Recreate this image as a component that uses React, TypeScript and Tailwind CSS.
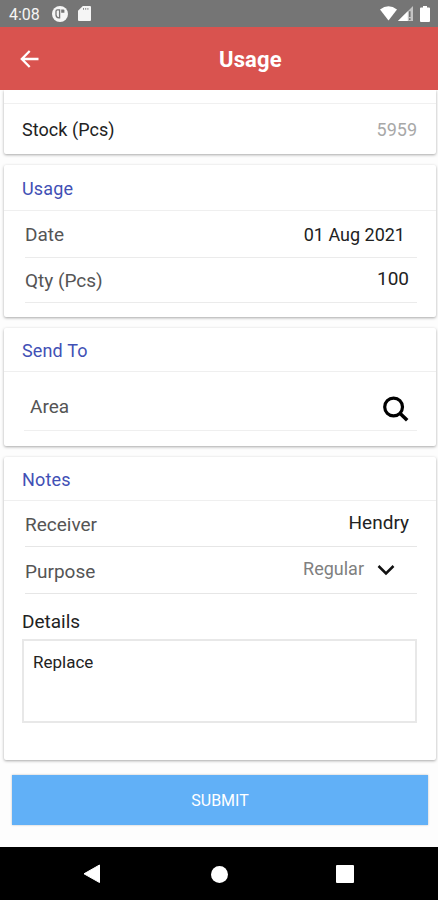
import type { ReactNode } from "react";

const Card = ({
  title,
  size = "sm",
  children,
}: {
  title: string;
  size?: "sm" | "md";
  children: ReactNode;
}) => {
  return (
    <section className="mx-1 mr-0.5 rounded-[2px] bg-white shadow-[0_1px_3px_rgba(0,0,0,0.34)]">
      <h2
        className={`flex items-center border-b border-[#efefef] pl-[18px] text-[18px] tracking-[0.15px] text-[#4150b5] ${
          size === "md" ? "h-[46px] pt-px" : "h-[44px] pt-[2px]"
        }`}
      >
        {title}
      </h2>
      {children}
    </section>
  );
};

const StatusBar = () => {
  return (
    <div className="flex h-[27px] shrink-0 items-center bg-[#757575] pl-[9px] pr-[8px] text-[#f5f5f5]">
      <span className="w-[43px] pt-[2px] text-[16px] leading-none">4:08</span>
      <svg width="16" height="16" viewBox="0 0 16 16">
        <circle cx="8" cy="8" r="8" fill="#f5f5f5" />
        <path
          d="M7.6 3.8H5.4a1.4 1.4 0 0 0-1.4 1.4v3.6a3 3 0 0 0 3 3h.6z"
          fill="none"
          stroke="#757575"
          strokeWidth="1.3"
        />
        <path d="M9.2 3.6h2.2a1 1 0 0 1 1 1v2.2H9.2z" fill="#757575" />
      </svg>
      <svg className="ml-[10px]" width="13" height="15" viewBox="0 0 13 15">
        <path
          d="M4.8 0H12a1 1 0 0 1 1 1v13a1 1 0 0 1-1 1H1a1 1 0 0 1-1-1V4.8z"
          fill="#f5f5f5"
        />
        <path d="M5.5 2v1.8M7.7 2v1.8M9.9 2v1.8" stroke="#8a8a8a" strokeWidth="1" />
      </svg>
      <svg className="ml-auto" width="17" height="15" viewBox="0 0 17 15">
        <path d="M0 3.5Q8.5-2.9 17 3.5L8.5 14.5z" fill="#fff" />
      </svg>
      <svg className="ml-[1px]" width="15" height="15" viewBox="0 0 15 15">
        <path d="M15 0v15H0z" fill="#c4c4c4" />
        <path d="M9.8 5.2V15H0z" fill="#fff" />
        <path d="M11.8 5.2v5.8M11.8 12.3V14" stroke="#686868" strokeWidth="1.4" />
      </svg>
      <svg className="ml-[7px]" width="10" height="16" viewBox="0 0 10 16">
        <path
          d="M3 0h4v1.5h2a1 1 0 0 1 1 1V15a1 1 0 0 1-1 1H1a1 1 0 0 1-1-1V2.5a1 1 0 0 1 1-1h2z"
          fill="#fff"
        />
      </svg>
    </div>
  );
};

const Header = () => {
  return (
    <header className="flex h-[63px] shrink-0 items-center bg-[#d9534f] pl-[20px] text-white">
      <svg width="20" height="18" viewBox="0 0 20 18">
        <path
          d="M18.5 9H2M9.7 1L1.8 9l7.9 8"
          fill="none"
          stroke="currentColor"
          strokeWidth="2.3"
        />
      </svg>
      <h1 className="ml-[179px] pt-[2px] text-[22px] font-bold tracking-[0.15px]">Usage</h1>
    </header>
  );
};

const NavBar = () => {
  return (
    <nav className="mt-auto h-[53px] shrink-0 bg-black pl-[83px] pt-[17px]">
      <div className="flex h-[20px] items-center">
        <svg width="18" height="20" viewBox="0 0 18 20">
          <path d="M16.5 1v17.5L1 9.8z" fill="#fff" stroke="#fff" strokeLinejoin="round" />
        </svg>
        <div className="ml-[110px] size-[17px] rounded-full bg-white" />
        <div className="ml-[108px] size-[18px] rounded-[1px] bg-white" />
      </div>
    </nav>
  );
};

const App = () => {
  return (
    <div className="flex h-[900px] w-[438px] flex-col overflow-hidden bg-[#fdfdfd] font-[Roboto,sans-serif] text-[19px] leading-[27px] text-[#555]">
      <StatusBar />
      <Header />
      <main className="flex flex-col">
        <section className="mx-1 mr-0.5 h-[64px] rounded-b-[2px] bg-white pt-[13px] shadow-[0_1px_3px_rgba(0,0,0,0.34)] [clip-path:inset(0_-4px_-5px_-4px)]">
          <div className="flex h-[51px] items-center justify-between border-t border-[#f0f0f0] pl-[18px] pr-[19px] text-[18px]">
            <span className="tracking-[0.05px] text-[#222]">Stock (Pcs)</span>
            <span className="text-[#a8a8a8]">5959</span>
          </div>
        </section>

        <div className="mt-[11px]">
          <Card title="Usage" size="md">
            <div className="ml-[21px] mr-[19px] h-[106px]">
              <div className="flex h-[47px] items-center justify-between border-b border-[#ebebeb] pr-[12px]">
                <span>Date</span>
                <span className="text-[18px] text-[#222]">01 Aug 2021</span>
              </div>
              <div className="flex h-[45px] items-center justify-between border-b border-[#ebebeb] pr-[8px]">
                <span className="pt-px">Qty (Pcs)</span>
                <span className="pb-[4px] text-[#222]">100</span>
              </div>
            </div>
          </Card>
        </div>

        <div className="mt-[11px]">
          <Card title="Send To">
            <div className="ml-[20px] mr-[19px] h-[74px]">
              <div className="flex h-[59px] items-center justify-between border-b border-[#efefef] pl-[6px] pr-[8px] pt-[11px]">
                <span>Area</span>
                <svg className="mt-[4px]" width="26" height="26" viewBox="0 0 26 26" fill="none" stroke="#000">
                  <circle cx="10.6" cy="11" r="8.9" strokeWidth="3.2" />
                  <path d="M16.9 17.3L24.2 24.2" strokeWidth="3.6" />
                </svg>
              </div>
            </div>
          </Card>
        </div>

        <div className="mt-[11px]">
          <Card title="Notes">
            <div className="ml-[18px] mr-[19px] h-[259px]">
              <div className="ml-[3px]">
                <div className="flex h-[46px] items-center justify-between border-b border-[#e6e6e6] pr-[8px]">
                  <span className="pt-[2px]">Receiver</span>
                  <span className="pb-[3px] text-[#222]">Hendry</span>
                </div>
                <div className="flex h-[47px] items-center border-b border-[#e6e6e6]">
                  <span className="pt-[2px]">Purpose</span>
                  <span className="ml-auto pb-[3px] text-[18px] text-[#808080]">Regular</span>
                  <svg className="ml-[13px] mr-[22px]" width="18" height="12" viewBox="0 0 18 12">
                    <path d="M1.5 2L9 9.5L16.5 2" fill="none" stroke="#111" strokeWidth="2.5" />
                  </svg>
                </div>
              </div>
              <p className="mt-[14px] text-[#222]">Details</p>
              <div className="mt-[4px] h-[84px] border-2 border-[#e8e8e8] bg-white pl-[9px] pt-[8px] text-[17px] text-[#222]">
                Replace
              </div>
            </div>
          </Card>
        </div>

        <button className="ml-[12px] mr-[10px] mt-[15px] h-[50px] bg-[#61b0f7] text-[16px] text-white shadow-[0_0_2px_rgba(0,0,0,0.25)]">
          SUBMIT
        </button>
      </main>
      <NavBar />
    </div>
  );
};

export default App;
